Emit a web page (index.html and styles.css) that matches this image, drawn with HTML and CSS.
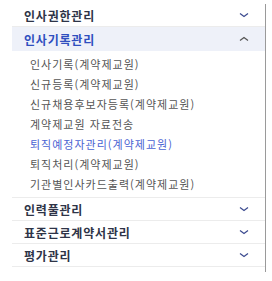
FILE: index.html
```html
<!DOCTYPE html>
<html lang="ko">
<head>
    <meta charset="UTF-8">
    <title>인사메뉴</title>
    <link rel="stylesheet" href="styles.css">
</head>
<body>

<div class="frame">
    <ul class="menu">
        <li class="menu-item">
            <div class="menu-head">
                <span>인사권한관리</span>
                <svg class="chev" width="10" height="6" viewBox="0 0 10 6"><path d="M1 1.5 L5 4.5 L9 1.5" fill="none" stroke="#3b4a8f" stroke-width="1.2"/></svg>
            </div>
        </li>
        <li class="menu-item open">
            <div class="menu-head">
                <span>인사기록관리</span>
                <svg class="chev" width="10" height="6" viewBox="0 0 10 6"><path d="M1 4.5 L5 1.5 L9 4.5" fill="none" stroke="#555" stroke-width="1.2"/></svg>
            </div>
            <ul class="sub">
                <li>인사기록(계약제교원)</li>
                <li>신규등록(계약제교원)</li>
                <li>신규채용후보자등록(계약제교원)</li>
                <li>계약제교원 자료전송</li>
                <li class="current">퇴직예정자관리(계약제교원)</li>
                <li>퇴직처리(계약제교원)</li>
                <li>기관별인사카드출력(계약제교원)</li>
            </ul>
        </li>
        <li class="menu-item">
            <div class="menu-head">
                <span>인력풀관리</span>
                <svg class="chev" width="10" height="6" viewBox="0 0 10 6"><path d="M1 1.5 L5 4.5 L9 1.5" fill="none" stroke="#3b4a8f" stroke-width="1.2"/></svg>
            </div>
        </li>
        <li class="menu-item">
            <div class="menu-head">
                <span>표준근로계약서관리</span>
                <svg class="chev" width="10" height="6" viewBox="0 0 10 6"><path d="M1 1.5 L5 4.5 L9 1.5" fill="none" stroke="#3b4a8f" stroke-width="1.2"/></svg>
            </div>
        </li>
        <li class="menu-item">
            <div class="menu-head">
                <span>평가관리</span>
                <svg class="chev" width="10" height="6" viewBox="0 0 10 6"><path d="M1 1.5 L5 4.5 L9 1.5" fill="none" stroke="#3b4a8f" stroke-width="1.2"/></svg>
            </div>
        </li>
    </ul>
</div>

</body>
</html>
```

FILE: styles.css
```css
body {
    margin: 0;
    padding: 13px 0 0 12px;
    background: #fff;
    font-family: "Noto Sans CJK KR", "Noto Sans", sans-serif;
    overflow: hidden;
}
.frame {
    width: 253px;
    height: 268px;
    border-right: 1px solid #9a9a9a;
}
.menu {
    list-style: none;
    margin: -9px 0 0 0;
    padding: 0;
}
.menu-item {
    border-bottom: 1px solid #ececec;
}
.menu-head {
    display: flex;
    align-items: center;
    justify-content: space-between;
    height: 22px;
    padding: 0 16px 0 12px;
    font-size: 12px;
    font-weight: bold;
    letter-spacing: 0.8px;
    color: #2e3447;
}
.open .menu-head {
    height: 24px;
    background-color: #eef1f9;
    color: #2f4fbf;
}
.sub {
    list-style: none;
    margin: 0;
    padding: 3px 0 3px 18px;
}
.sub li {
    height: 20px;
    line-height: 20px;
    font-size: 11px;
    letter-spacing: 1px;
    color: #555;
}
.sub li.current {
    color: #4a62d2;
}
```
